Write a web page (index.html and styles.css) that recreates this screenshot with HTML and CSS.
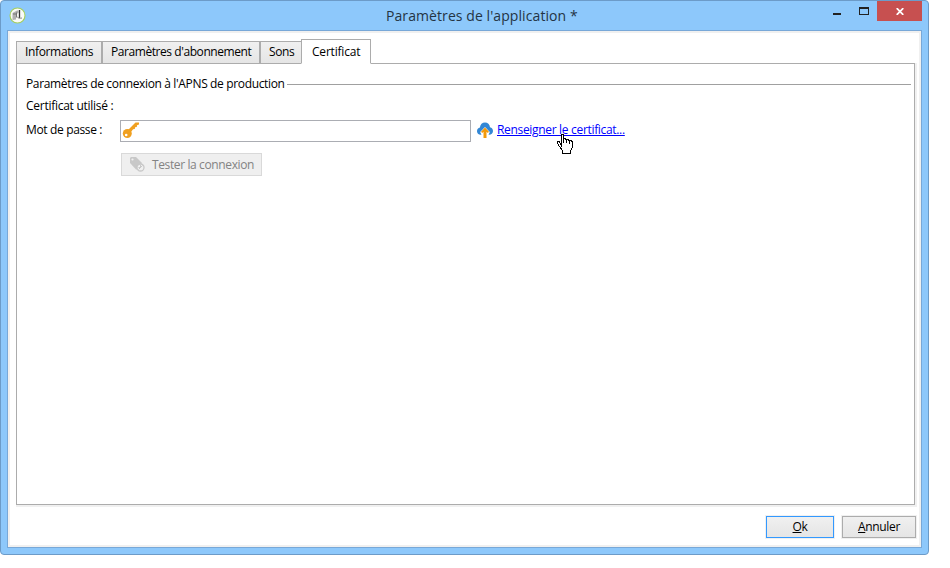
FILE: index.html
```html
<!DOCTYPE html>
<html lang="fr">
<head>
<meta charset="utf-8">
<title>Paramètres de l'application</title>
<link rel="stylesheet" href="styles.css">
</head>
<body>
<div class="window">
  <header class="titlebar">
    <svg class="app-icon" width="17" height="17" viewBox="0 0 17 17">
      <circle cx="8.5" cy="8.5" r="7.5" fill="#fafbf7" stroke="#a5cf5c" stroke-width="1.1"/>
      <path d="M3.500 6L8 3.500h1.500V6L7 7v5.500L3.500 13z" fill="#b0b0b0"/>
      <path d="M4 7h3M7.500 5.500v5" stroke="#777" fill="none"/>
      <path d="M10.500 3v8" stroke="#333" stroke-width="1.3"/>
      <path d="M8 9.500c1 2 3 2 5 1.500" stroke="#888" fill="none"/>
    </svg>
    <h1 class="title"><span>Paramètres de l'application *</span></h1>
    <div class="controls">
      <svg width="48" height="20" viewBox="0 0 48 20" shape-rendering="crispEdges">
        <rect x="4" y="12" width="8" height="2" fill="#222"/>
        <path d="M30 6h10v8H30z M31 8v5h8V8z" fill="#222" fill-rule="evenodd"/>
      </svg>
      <button class="close" aria-label="Fermer"><svg width="8" height="7" viewBox="0 0 8 7"><path d="M.7.2l6.600 6.600M7.300.2L.7 6.800" stroke="#fff" stroke-width="1.8"/></svg></button>
    </div>
  </header>
  <main class="content">
    <nav class="tabs">
      <span class="tab info"><span>Informations</span></span>
      <span class="tab sub"><span>Paramètres d'abonnement</span></span>
      <span class="tab sounds"><span>Sons</span></span>
      <span class="tab active"><span>Certificat</span></span>
    </nav>
    <section class="panel">
      <div class="legend"><span>Paramètres de connexion à l'APNS de production</span></div>
      <div class="row used"><span class="used-text">Certificat utilisé :</span></div>
      <div class="row password">
        <span class="label"><span>Mot de passe :</span></span>
        <div class="field">
          <svg width="18" height="18" viewBox="0 0 18 18">
            <path d="M5 9L13.500.5H17v2l-2 .8-.2 1.700-1.700.3-.3 1.700-1.700.2-2.600 3.300z" fill="#f0a020"/>
            <circle cx="5.3" cy="11.5" r="4.5" fill="#f0a020"/>
            <circle cx="4.2" cy="13" r="1.300" fill="#fff"/>
          </svg>
        </div>
        <svg class="cloud" width="16" height="16" viewBox="0 0 16 16">
          <path d="M3.800 12.800C1.300 12.800 0 11 0 9.200c0-1.900 1.200-3.300 2.900-3.600C3.200 2.300 5.300.5 8 .5s4.700 1.800 5 4.700c1.800.4 3 1.900 3 3.800 0 2.200-1.600 3.800-4 3.800z" fill="#3287d5"/>
          <path d="M3.200 10L8 5l4.800 5-1.300 3H4.500z" fill="#fff"/>
          <path d="M8 5.500l4 4.300-1.200 1.100-1.300-1.200V16h-3V9.700l-1.300 1.200L4 9.800z" fill="#f39a0b"/>
        </svg>
        <span class="link-wrap"><a class="link">Renseigner le certificat...</a>
          <svg class="pointer" width="17" height="22" viewBox="0 0 17 22" shape-rendering="crispEdges">
            <path d="M4.500 13.500V1.500h2v8-4h2v1h3v1h3l1 2v5l-2 3v3h-8v-3l-3-4-2-3v-2h2z" fill="#fff" stroke="#000"/>
            <path d="M6.500 5v5M9.500 6v4M12.500 7v4" stroke="#000"/>
          </svg>
        </span>
      </div>
      <button class="test" disabled>
        <svg width="15" height="15" viewBox="0 0 15 15">
          <path d="M0 1l1-1h5l6 6-5 6.500H6L0 6z" fill="#c8c8c8"/>
          <circle cx="2.500" cy="2.500" r="1.100" fill="#f0f0f0"/>
          <circle cx="10.500" cy="10.500" r="3.500" fill="#f0f0f0" stroke="#c8c8c8" stroke-width="1.300"/>
          <path d="M8.500 12.500l4-4M10.500 8v2.500h-2" stroke="#c8c8c8" fill="none"/>
        </svg>
        <span>Tester la connexion</span>
      </button>
    </section>
    <footer class="footer">
      <button class="btn ok"><span><u>O</u>k</span></button>
      <button class="btn cancel"><span><u>A</u>nnuler</span></button>
    </footer>
  </main>
</div>
</body>
</html>
```
FILE: styles.css
```css
* { box-sizing: border-box; }
body { margin: 0; background: #fff; color: #000; font: 12px/16px "Open Sans", sans-serif; letter-spacing: -0.35px; overflow: hidden; }
button { font: inherit; color: inherit; letter-spacing: inherit; padding: 0; margin: 0; }
svg { display: block; flex: none; }
span { white-space: nowrap; }
.window { width: 929px; height: 555px; border: 1px solid #6c9bc8; border-radius: 4px; background: #8dc8fb; padding: 0 7px 6px 6px; }
.titlebar { height: 29px; display: flex; align-items: flex-start; }
.app-icon { margin: 6px 0 0 2px; }
.title { flex: 1; margin: 5px 0 0; padding-left: 360px; font-size: 14px; line-height: 20px; font-weight: 400; letter-spacing: 0.08px; color: #243444; white-space: nowrap; }
.controls { display: flex; flex: none; margin-right: -1px; }
.close { width: 45px; height: 20px; border: 0; background: #c75050; display: flex; align-items: center; justify-content: center; padding-top: 1px; }
.content { width: 915px; height: 518px; background: #fff; border: 1px solid #78a8d8; box-shadow: inset 0 0 0 2px #f0f0f0; padding: 8px 6px 9px 8px; display: flex; flex-direction: column; }
.tabs { display: flex; align-items: flex-end; height: 25px; position: relative; z-index: 1; margin-bottom: -1px; }
.tab { height: 23px; border: 1px solid #acacac; background: linear-gradient(#f0f0f0, #e5e5e5); padding: 2px 0 0 8px; }
.info { width: 86px; }
.sub { width: 158px; letter-spacing: -0.43px; }
.sounds { width: 42px; }
.active { width: 70px; height: 25px; margin-left: -1px; background: #fff; border-bottom-color: #fff; padding: 4px 0 0 10px; letter-spacing: -0.2px; }
.panel { width: 899px; height: 442px; border: 1px solid #acacac; box-shadow: 1px 1px 0 1px #f0f0f0; padding: 11px 3px 0 9px; }
.legend { display: flex; align-items: center; height: 18px; gap: 2px; }
.legend::after { content: ""; flex: 1; height: 1px; background: #a0a0a0; }
.row { display: flex; align-items: center; }
.used { height: 26px; letter-spacing: -0.27px; }
.password { height: 22px; margin-top: 1px; }
.label { width: 94px; flex: none; margin-top: -2px; }
.field { width: 351px; height: 22px; border: 1px solid #abadb3; padding: 1px; flex: none; }
.cloud { margin: -2px 0 0 6px; }
.link-wrap { position: relative; margin: -2px 0 0 4px; letter-spacing: -0.32px; }
.link { color: #00f; text-decoration: underline; }
.pointer { position: absolute; left: 60px; top: 11px; }
.test { width: 141px; height: 23px; margin: 11px 0 0 95px; border: 1px solid #d9d9d9; background: #efefef; color: #838383; display: flex; align-items: center; padding-left: 8px; gap: 7px; letter-spacing: -0.38px; }
.footer { display: flex; justify-content: flex-end; gap: 8px; margin-top: 11px; width: 900px; }
.btn { height: 22px; border: 1px solid #acacac; background: linear-gradient(#f0f0f0, #e5e5e5); box-shadow: 0 0 0 1px #f0f0f0; }
.ok { width: 68px; border-color: #3399ff; }
.cancel { width: 74px; }
```
